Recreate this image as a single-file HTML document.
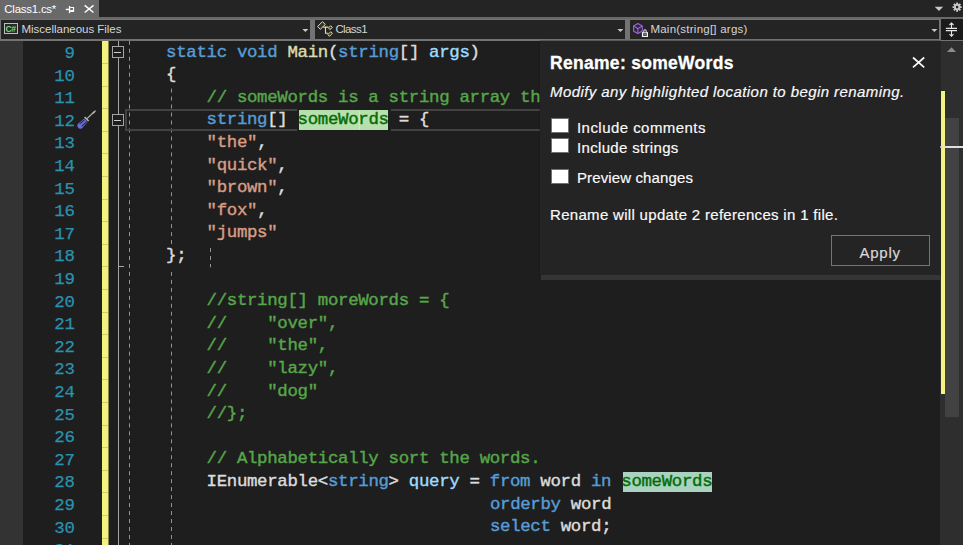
<!DOCTYPE html>
<html lang="en"><head><meta charset="utf-8"><title>Class1.cs - Rename</title>
<style>
html,body{margin:0;padding:0}
body{width:963px;height:545px;overflow:hidden;background:#1e1e1e;position:relative;font-family:'Liberation Sans', sans-serif;color:#dcdcdc}
div,span,svg{position:absolute}
span{position:static}
.ui{font-size:11.5px;line-height:14px;color:#d6d6d6;white-space:pre}
#tabwell{left:0;top:0;width:963px;height:16.6px;background:#242424}
#band{left:0;top:16px;width:963px;height:25.2px;background:#737373}
#band2{left:0;top:16px;width:963px;height:2.7px;background:#696969}
#tab{left:0;top:0;width:98.9px;height:18px;background:#696969}
.dd{top:20.2px;height:18.5px;background:#242424}
#split{left:941.2px;top:19.3px;width:22px;height:20.4px;background:#1b1b1b}
#lm{left:0;top:41px;width:23px;height:504px;background:#333333}
#ybar{left:102px;top:41px;width:6px;height:504px;background:#f2f27e}
#ybar2{left:108px;top:41px;width:1px;height:504px;background:#88884e}
.ysep{left:102px;width:6px;height:1px;background:#cdcd6c}
.ln{left:24px;width:50.4px;text-align:right;color:#2b91af}
.ln,.cl{font-family:'Liberation Mono', monospace;font-size:17.400px;line-height:22.6px;height:22.6px;white-space:pre;letter-spacing:-0.322px;-webkit-text-stroke:0.42px currentColor}
.cl{color:#dcdcdc}
.ln{font-size:17.4px;letter-spacing:-0.322px;width:50.5px;-webkit-text-stroke-width:0.25px}
.k{color:#569cd6}.c{color:#57a64a}.s{color:#d69d85}.m{color:#dcdcaa}.v{color:#9cdcfe}
.r{color:#056b05}
.hl{background:#b6e0ac;height:20px;width:89.5px}
#sb{left:940px;top:41px;width:23px;height:504px;background:#2e2e2e}
#thumb{left:945px;top:118px;width:14px;height:299px;background:#424242}
#sby{left:941px;top:90.5px;width:4px;height:303.5px;background:#f4f47e}
#caretmark{left:940px;top:146px;width:23px;height:1.5px;background:#e0e0e0}
#panel{left:540px;top:41px;width:400px;height:234px;background:#242424;box-shadow:0 0 1.5px #141414}
#pshadow{left:540.5px;top:275px;width:399.5px;height:5px;background:#353535}
.pt{white-space:pre;color:#fafafa;-webkit-text-stroke:0.18px currentColor}
.cb{left:550.8px;width:16.4px;height:13.2px;background:#fff;border:1.4px solid #707070}
#apply{left:831px;top:235px;width:97.4px;height:29px;border:1px solid #7160e8}
</style></head><body>

<div id="band"></div><div id="band2"></div><div id="tabwell"></div><div id="tab"></div>
<div class="ui" style="left:4.3px;top:1.6px;color:#ffffff;font-size:11.4px;letter-spacing:-0.2px">Class1.cs*</div>
<svg style="left:65px;top:5px" width="11" height="10" viewBox="0 0 11 10"><g fill="#ffffff"><rect x="0.8" y="3.75" width="3.3" height="1.4"/><rect x="3.9" y="1" width="1.3" height="7.1"/><rect x="5.2" y="5" width="3.9" height="2"/></g><path d="M5.2 2.5H8.5V6" fill="none" stroke="#ffffff" stroke-width="1.2"/></svg>
<svg style="left:84px;top:4px" width="11" height="10" viewBox="0 0 11 10"><path d="M0.7 1.4L9.5 8.5M9.5 1.4L0.7 8.5" fill="none" stroke="#ffffff" stroke-width="1.45"/></svg>
<svg style="left:934px;top:6px" width="10" height="6" viewBox="0 0 10 6"><path d="M0.7 0.8H9.2L4.95 4.9Z" fill="#c8c8c8"/></svg>
<svg style="left:951px;top:1px" width="12" height="12" viewBox="-6.1 -6.1 12 12"><g fill="none" stroke="#c8c8c8"><circle r="2.3" stroke-width="2"/><path d="M2.90 0.00L4.60 0.00M2.05 2.05L3.25 3.25M0.00 2.90L0.00 4.60M-2.05 2.05L-3.25 3.25M-2.90 0.00L-4.60 0.00M-2.05 -2.05L-3.25 -3.25M-0.00 -2.90L-0.00 -4.60M2.05 -2.05L3.25 -3.25" stroke-width="1.9"/></g></svg>
<div class="dd" style="left:1px;width:309px"></div>
<svg style="left:302px;top:28px" width="8" height="5" viewBox="0 0 8 5"><path d="M0.4 1H6.4L3.4 4.1Z" fill="#c8c8c8"/></svg>
<div class="dd" style="left:315px;width:310px"></div>
<svg style="left:617px;top:28px" width="8" height="5" viewBox="0 0 8 5"><path d="M0.4 1H6.4L3.4 4.1Z" fill="#c8c8c8"/></svg>
<div class="dd" style="left:630px;width:309px"></div>
<svg style="left:931px;top:28px" width="8" height="5" viewBox="0 0 8 5"><path d="M0.4 1H6.4L3.4 4.1Z" fill="#c8c8c8"/></svg>
<div id="split"></div>
<svg style="left:945px;top:22px" width="13" height="15" viewBox="0 0 13 15"><g fill="none" stroke="#e6e6e6"><path d="M0.9 6.25H12M0.9 8.55H12" stroke-width="1.25"/><path d="M6.5 1V6M6.5 9V14.2" stroke-width="1.1"/><path d="M4.5 3L6.5 1L8.5 3M4.5 12.2L6.5 14.2L8.5 12.2" stroke-width="1.1"/></g></svg>
<div style="left:4px;top:23px;width:11.7px;height:9.3px;border:1.2px solid #bdbdbd;background:#2a2a2a"></div>
<div style="left:5.5px;top:23.6px;font:bold 8.6px/11px 'Liberation Sans', sans-serif;color:#7fd97f;letter-spacing:-0.5px">C#</div>
<div class="ui" style="left:21.5px;top:22.0px;font-size:11.5px;letter-spacing:-0.02px">Miscellaneous Files</div>
<svg style="left:316px;top:20px" width="18" height="18" viewBox="0 0 18 18"><g fill="#34322a" stroke="#f2dc94" stroke-width="1"><path d="M6.5 1.6L9.3 4.5L4.3 9.3L1.6 6.5Z"/><path d="M14.6 5.7L16.4 7.5L13.8 9.6L12.5 7.9Z"/><path d="M14.8 11.7L16.4 13.3L13.4 16.4L11.9 14.6Z"/><path d="M7.3 7.1H12.3M9.5 7.1V13.3H12.3" fill="none" stroke-width="1.1"/></g></svg>
<div class="ui" style="left:335.4px;top:22.0px;font-size:11.5px;letter-spacing:-0.6px">Class1</div>
<svg style="left:632px;top:22px" width="17" height="16" viewBox="0 0 17 16"><g fill="#2e2738" stroke="#9a66d8" stroke-width="1.1" stroke-linejoin="round"><path d="M5.9 1.6L10.3 3.9V9.1L5.9 11.6L1.6 9.2V3.9Z"/><path d="M1.6 3.9L5.9 6.7L10.3 3.9M5.9 6.7V11.6" fill="none"/></g><rect x="10.5" y="10.7" width="4.9" height="3.7" fill="#242424" stroke="#f4f4f4" stroke-width="1.2"/><path d="M11.2 12.5H14.8" stroke="#8a8a8a" stroke-width="0.8"/><path d="M11.8 10.3V8.9A1.2 1.2 0 0 1 14.2 8.9V10.3" fill="#242424" stroke="#f4f4f4" stroke-width="0.95"/></svg>
<div class="ui" style="left:650.4px;top:22.1px;font-size:11.5px;letter-spacing:0.24px">Main(string[] args)</div>
<div id="lm"></div><div id="ybar"></div><div id="ybar2"></div>
<div class="ysep" style="top:63.0px"></div>
<div class="ysep" style="top:85.6px"></div>
<div class="ysep" style="top:108.2px"></div>
<div class="ysep" style="top:130.8px"></div>
<div class="ysep" style="top:153.4px"></div>
<div class="ysep" style="top:176.0px"></div>
<div class="ysep" style="top:198.6px"></div>
<div class="ysep" style="top:221.2px"></div>
<div class="ysep" style="top:243.8px"></div>
<div class="ysep" style="top:266.4px"></div>
<div class="ysep" style="top:289.0px"></div>
<div class="ysep" style="top:311.6px"></div>
<div class="ysep" style="top:334.2px"></div>
<div class="ysep" style="top:356.8px"></div>
<div class="ysep" style="top:379.4px"></div>
<div class="ysep" style="top:402.0px"></div>
<div class="ysep" style="top:424.6px"></div>
<div class="ysep" style="top:447.2px"></div>
<div class="ysep" style="top:469.8px"></div>
<div class="ysep" style="top:492.4px"></div>
<div class="ysep" style="top:515.0px"></div>
<div class="ysep" style="top:537.6px"></div>
<div style="left:118px;top:41px;width:1px;height:504px;background:#a5a5a5"></div>
<div style="left:118px;top:265.5px;width:6px;height:1px;background:#a5a5a5"></div>
<div style="left:112px;top:46px;width:10px;height:10px;border:1px solid #a5a5a5;background:#1e1e1e"></div>
<div style="left:114px;top:51.5px;width:7px;height:1px;background:#d0d0d0"></div>
<div style="left:112px;top:114.3px;width:10px;height:10px;border:1px solid #a5a5a5;background:#1e1e1e"></div>
<div style="left:114px;top:119.8px;width:7px;height:1px;background:#d0d0d0"></div>
<svg style="left:128px;top:41px" width="3" height="504" viewBox="0 0 3 504"><path d="M1.50 0.00V504.00" stroke="#929292" stroke-width="1" stroke-dasharray="4 3.97" stroke-dashoffset="0.20"/></svg>
<svg style="left:170px;top:88px" width="3" height="156" viewBox="0 0 3 156"><path d="M1.50 0.50V156.00" stroke="#929292" stroke-width="1" stroke-dasharray="4 3.97" stroke-dashoffset="7.85"/></svg>
<svg style="left:170px;top:270px" width="3" height="275" viewBox="0 0 3 275"><path d="M1.50 0.00V275.00" stroke="#929292" stroke-width="1" stroke-dasharray="4 3.97" stroke-dashoffset="6.04"/></svg>
<svg style="left:209px;top:246px" width="3" height="22" viewBox="0 0 3 22"><path d="M1.50 0.60V21.30" stroke="#929292" stroke-width="1" stroke-dasharray="4 3.97" stroke-dashoffset="6.55"/></svg>
<div style="left:124.5px;top:109.3px;width:420px;height:18px;border:2px solid #424242;border-right:0"></div><div style="left:296.8px;top:109px;width:94px;height:23px;background:#1e1e1e"></div>
<div class="ln" style="top:42.90px">9</div>
<div class="ln" style="top:65.50px">10</div>
<div class="ln" style="top:88.10px">11</div>
<div class="ln" style="top:110.70px">12</div>
<div class="ln" style="top:133.30px">13</div>
<div class="ln" style="top:155.90px">14</div>
<div class="ln" style="top:178.50px">15</div>
<div class="ln" style="top:201.10px">16</div>
<div class="ln" style="top:223.70px">17</div>
<div class="ln" style="top:246.30px">18</div>
<div class="ln" style="top:268.90px">19</div>
<div class="ln" style="top:291.50px">20</div>
<div class="ln" style="top:314.10px">21</div>
<div class="ln" style="top:336.70px">22</div>
<div class="ln" style="top:359.30px">23</div>
<div class="ln" style="top:381.90px">24</div>
<div class="ln" style="top:404.50px">25</div>
<div class="ln" style="top:427.10px">26</div>
<div class="ln" style="top:449.70px">27</div>
<div class="ln" style="top:472.30px">28</div>
<div class="ln" style="top:494.90px">29</div>
<div class="ln" style="top:517.50px">30</div>
<div class="ln" style="top:540.10px">31</div>
<div class="cl" style="left:166.08px;top:41.60px"><span class="k">static</span> <span class="k">void</span> <span class="m">Main</span>(<span class="k">string</span>[] <span class="v">args</span>)</div>
<div class="cl" style="left:166.08px;top:64.20px">{</div>
<div class="cl" style="left:206.56px;top:86.80px"><span class="c">// someWords is a string array that will be sorted.</span></div>
<div class="hl" style="left:298.8px;top:109.9px;width:89.2px;height:19.9px"></div>
<div class="cl" style="left:206.56px;top:109.40px"><span class="k">string</span>[] <span class="r">someWords</span> = {</div>
<div class="cl" style="left:206.56px;top:132.00px"><span class="s">&quot;the&quot;</span>,</div>
<div class="cl" style="left:206.56px;top:154.60px"><span class="s">&quot;quick&quot;</span>,</div>
<div class="cl" style="left:206.56px;top:177.20px"><span class="s">&quot;brown&quot;</span>,</div>
<div class="cl" style="left:206.56px;top:199.80px"><span class="s">&quot;fox&quot;</span>,</div>
<div class="cl" style="left:206.56px;top:222.40px"><span class="s">&quot;jumps&quot;</span></div>
<div class="cl" style="left:166.08px;top:245.00px">};</div>
<div class="cl" style="left:206.56px;top:290.20px"><span class="c">//string[] moreWords = {</span></div>
<div class="cl" style="left:206.56px;top:312.80px"><span class="c">//    &quot;over&quot;,</span></div>
<div class="cl" style="left:206.56px;top:335.40px"><span class="c">//    &quot;the&quot;,</span></div>
<div class="cl" style="left:206.56px;top:358.00px"><span class="c">//    &quot;lazy&quot;,</span></div>
<div class="cl" style="left:206.56px;top:380.60px"><span class="c">//    &quot;dog&quot;</span></div>
<div class="cl" style="left:206.56px;top:403.20px"><span class="c">//};</span></div>
<div class="cl" style="left:206.56px;top:448.40px"><span class="c">// Alphabetically sort the words.</span></div>
<div class="hl" style="left:623.1px;top:471.8px;width:89.3px;height:20.2px;background:#a9d3bf"></div>
<div class="cl" style="left:206.56px;top:471.00px">IEnumerable&lt;<span class="k">string</span>&gt; <span class="v">query</span> = <span class="k">from</span> word <span class="k">in</span> <span class="r">someWords</span></div>
<div class="cl" style="left:489.92px;top:493.60px"><span class="k">orderby</span> word</div>
<div class="cl" style="left:489.92px;top:516.20px"><span class="k">select</span> word;</div>
<div style="left:359px;top:110.5px;width:1.2px;height:19.5px;background:#dcdcdc"></div>
<svg style="left:76px;top:109px" width="21" height="21" viewBox="0 0 21 21"><path d="M11 9.6L18 3" stroke="#b4b4b4" stroke-width="1.2" fill="none"/><path d="M16.4 3.4L19.2 1.2L20 2L17.8 4.8Z" fill="#b8b8b8"/><path d="M8 8.6L9.2 7.4L13.2 11.4L12 12.6Z" fill="#b4b4b4"/><path d="M8.2 9.6L11.6 13L6.8 18.6A2.9 2.9 0 0 1 2.2 14.6Z" fill="#6a70d2"/><path d="M3.6 14.8L8.6 10.6M5.6 17.4L10.8 12.6" stroke="#26274a" stroke-width="1.1" fill="none"/></svg>
<div id="sb"></div><div id="thumb"></div><div id="sby"></div><div id="caretmark"></div>
<svg style="left:947px;top:47px" width="9" height="5" viewBox="0 0 9 5"><path d="M0 5L4.5 0.3L9 5Z" fill="#8c8c8c"/></svg>
<div id="panel"></div><div id="pshadow"></div>
<div class="pt" style="left:550px;top:52.1px;font:bold 17.5px/22px 'Liberation Sans', sans-serif;letter-spacing:0.3px;color:#ffffff;-webkit-text-stroke:0.3px #fff">Rename: someWords</div>
<svg style="left:911px;top:56px" width="15" height="13" viewBox="0 0 15 13"><path d="M2 1.5L13.2 11.3M13.2 1.5L2 11.3" stroke="#f8f8f8" stroke-width="1.7" fill="none"/></svg>
<div class="pt" style="left:550px;top:83px;font:italic 15px/18px 'Liberation Sans', sans-serif;letter-spacing:0.42px">Modify any highlighted location to begin renaming.</div>
<div class="cb" style="top:118.3px"></div>
<div class="pt" style="left:577px;top:118.8px;font:15px/18px 'Liberation Sans', sans-serif;letter-spacing:0.45px">Include comments</div>
<div class="cb" style="top:138.3px"></div>
<div class="pt" style="left:577px;top:138.8px;font:15px/18px 'Liberation Sans', sans-serif;letter-spacing:0.33px">Include strings</div>
<div class="cb" style="top:169.3px"></div>
<div class="pt" style="left:577px;top:168.9px;font:15px/18px 'Liberation Sans', sans-serif;letter-spacing:0.12px">Preview changes</div>
<div class="pt" style="left:550px;top:205.5px;font:15px/18px 'Liberation Sans', sans-serif;letter-spacing:0.31px">Rename will update 2 references in 1 file.</div>
<div id="apply"></div>
<div class="pt" style="left:859.6px;top:244px;font:15px/18px 'Liberation Sans', sans-serif;letter-spacing:0.7px;color:#d8d8d8">Apply</div>
</body></html>
